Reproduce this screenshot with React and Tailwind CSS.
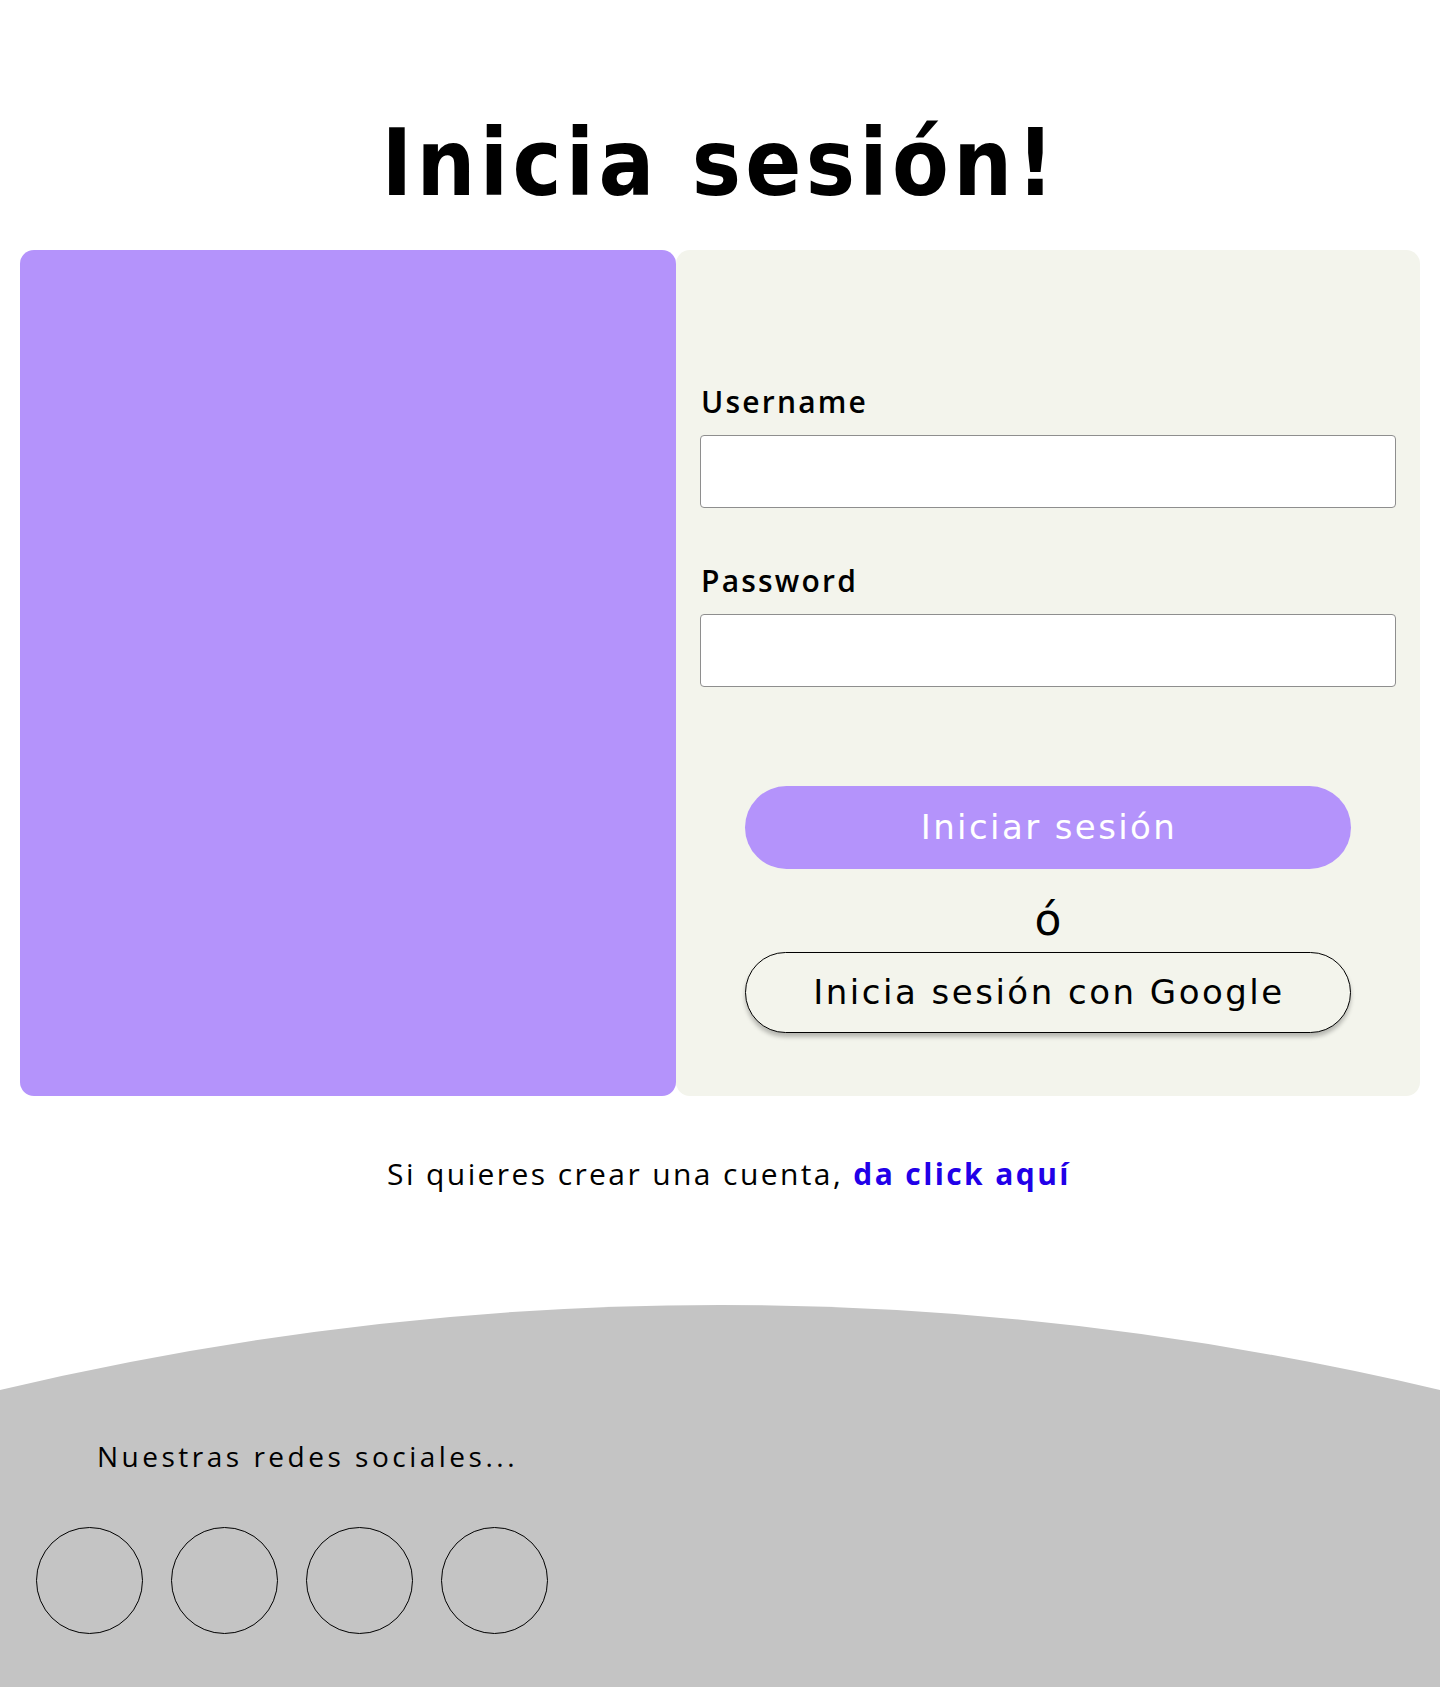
import React from "react";

export default function App() {
  return (
    <div className="w-full min-h-[1687px] bg-white flex flex-col text-black font-['Open_Sans','Noto_Sans',sans-serif]">
      <h1 className="pt-[118px] text-center text-[92px] leading-[92px] font-bold tracking-[4.3px] font-stretch-condensed font-['DejaVu_Sans_Condensed','DejaVu_Sans',sans-serif]">
        Inicia sesión!
      </h1>

      <div className="mt-[40px] mx-[20px] flex h-[846px]">
        <div className="w-[656px] shrink-0 bg-[#b493fb] rounded-[14px]" />
        <div className="flex-1 bg-[#f3f4ec] rounded-[14px] pt-[137px] px-[24px] pb-[63px] flex flex-col">
          <label className="block text-[30px] leading-[30px] tracking-[2.2px] font-semibold pl-[1px]">
            Username
          </label>
          <input
            type="text"
            className="mt-[18px] h-[73px] w-full bg-white border border-[#8e8e8e] rounded-[4px] outline-none"
          />
          <label className="mt-[58px] block text-[30px] leading-[30px] tracking-[2.2px] font-semibold pl-[1px]">
            Password
          </label>
          <input
            type="password"
            className="mt-[18px] h-[73px] w-full bg-white border border-[#8e8e8e] rounded-[4px] outline-none"
          />
          <div className="mt-[99px] mx-auto w-[606px] flex flex-col items-center font-['DejaVu_Sans',sans-serif]">
            <button className="w-full h-[83px] rounded-full bg-[#b493fb] text-white text-[34px] tracking-[2.4px] pl-[2px]">
              Iniciar sesión
            </button>
            <span className="mt-[31px] h-[40px] leading-[40px] text-[44px]">ó</span>
            <button className="mt-[12px] w-full h-[81px] rounded-full border border-black bg-[#f3f4ec] text-black text-[34px] tracking-[2.5px] pl-[2px] shadow-[0_4px_4px_rgba(0,0,0,0.25)]">
              Inicia sesión con Google
            </button>
          </div>
        </div>
      </div>

      <p className="mt-[63px] pl-[18px] text-center text-[30px] leading-[30px] tracking-[2.4px]">
        Si quieres crear una cuenta,{" "}
        <a href="#" className="font-bold text-[#2100e8]">
          da click aquí
        </a>
      </p>

      <footer className="mt-[116px]">
        <svg
          className="block w-full h-[85px]"
          viewBox="0 0 1440 85"
          preserveAspectRatio="none"
        >
          <path d="M0 85 Q720 -85 1440 85 Z" fill="#c4c4c4" />
        </svg>
        <div className="bg-[#c4c4c4] pt-[52px] pb-[53px]">
          <p className="pl-[97px] text-[28px] leading-[28px] tracking-[3.5px]">
            Nuestras redes sociales...
          </p>
          <div className="mt-[57px] pl-[36px] flex gap-[28px]">
            <div className="w-[107px] h-[107px] rounded-full border border-black" />
            <div className="w-[107px] h-[107px] rounded-full border border-black" />
            <div className="w-[107px] h-[107px] rounded-full border border-black" />
            <div className="w-[107px] h-[107px] rounded-full border border-black" />
          </div>
        </div>
      </footer>
    </div>
  );
}
